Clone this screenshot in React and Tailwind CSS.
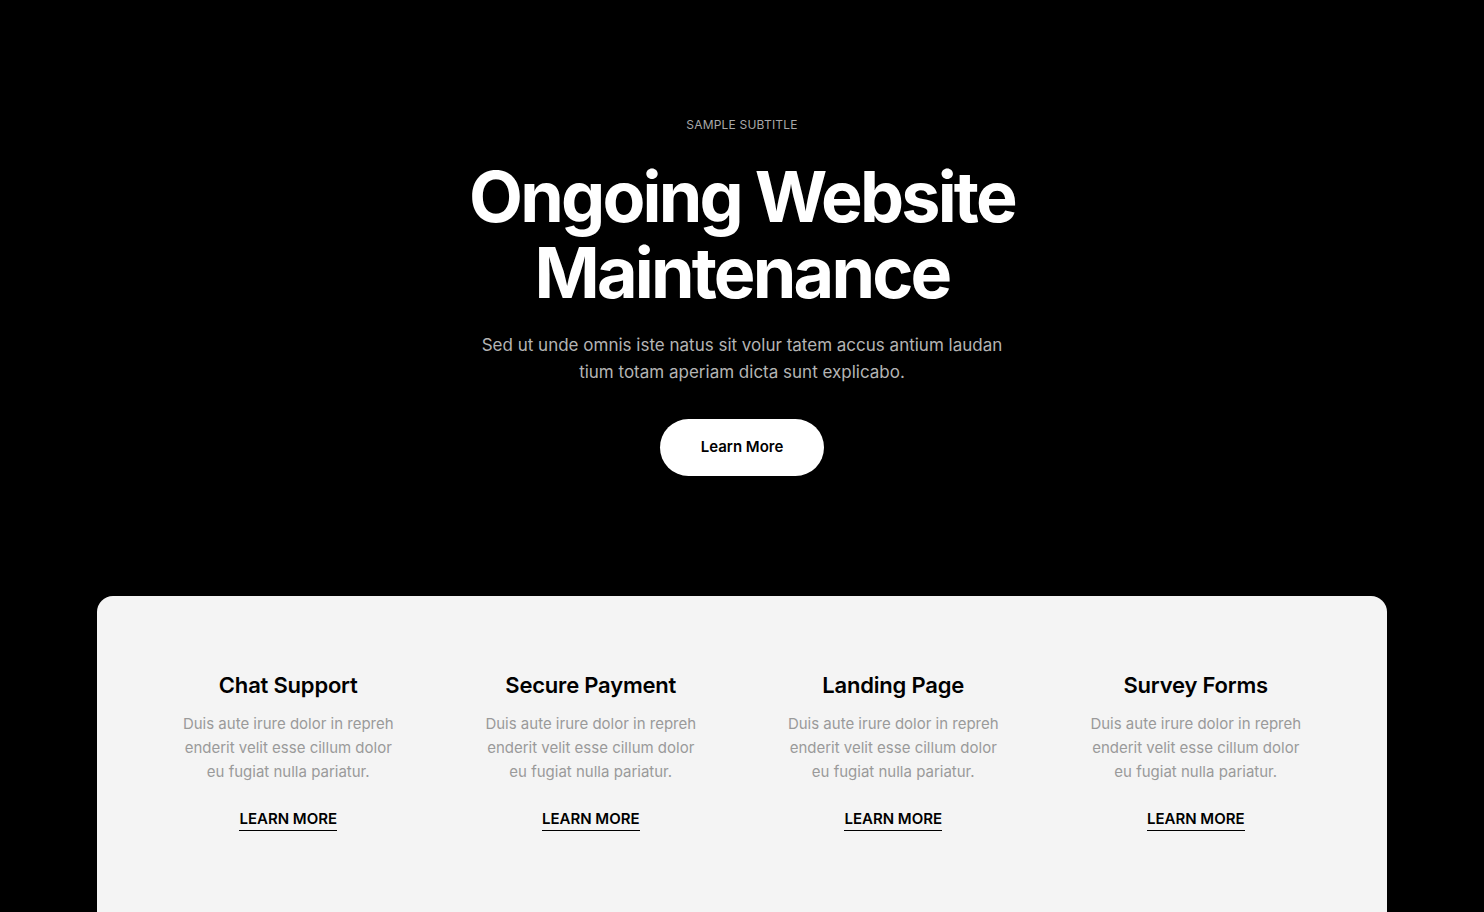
import React from "react";

const services = [
  { title: "Chat Support" },
  { title: "Secure Payment" },
  { title: "Landing Page" },
  { title: "Survey Forms" },
];

function ServiceItem({ title }) {
  return (
    <div className="flex flex-col items-center text-center">
      <h3 className="text-[22px] font-semibold leading-[30px] text-black tracking-[-0.2px]">
        {title}
      </h3>
      <p className="mt-[12px] max-w-[215px] text-[15px] leading-[24px] text-[#9a9a9a]">
        Duis aute irure dolor in repreh enderit velit esse cillum dolor eu
        fugiat nulla pariatur.
      </p>
      <a
        href="#"
        className="mt-[25px] text-[15px] font-semibold leading-[20px] text-black border-b border-black pb-[1px]"
      >
        LEARN MORE
      </a>
    </div>
  );
}

export default function App() {
  return (
    <div
      className="min-h-[912px] bg-black overflow-hidden"
      style={{ fontFamily: "Inter, 'Noto Sans', sans-serif" }}
    >
      <section className="flex flex-col items-center pt-[117px] text-center">
        <span className="text-[12px] leading-[16px] text-[#a8a8a8] tracking-[0.2px]">
          SAMPLE SUBTITLE
        </span>
        <h1 className="mt-[26px] text-[70px] font-bold leading-[76px] tracking-[-2.8px] text-white">
          Ongoing Website
          <br />
          Maintenance
        </h1>
        <p className="mt-[21px] max-w-[540px] text-[17px] leading-[27px] text-[#b4b4b4]">
          Sed ut unde omnis iste natus sit volur tatem accus antium laudan
          tium totam aperiam dicta sunt explicabo.
        </p>
        <button className="mt-[33px] h-[57px] w-[164px] rounded-full bg-white text-[15px] font-semibold text-black">
          Learn More
        </button>
      </section>

      <section className="mx-[97px] mt-[120px] min-h-[320px] rounded-t-[16px] bg-[#f4f4f4] px-[40px] pt-[74px]">
        <div className="grid grid-cols-4">
          {services.map((s) => (
            <ServiceItem key={s.title} title={s.title} />
          ))}
        </div>
      </section>
    </div>
  );
}
